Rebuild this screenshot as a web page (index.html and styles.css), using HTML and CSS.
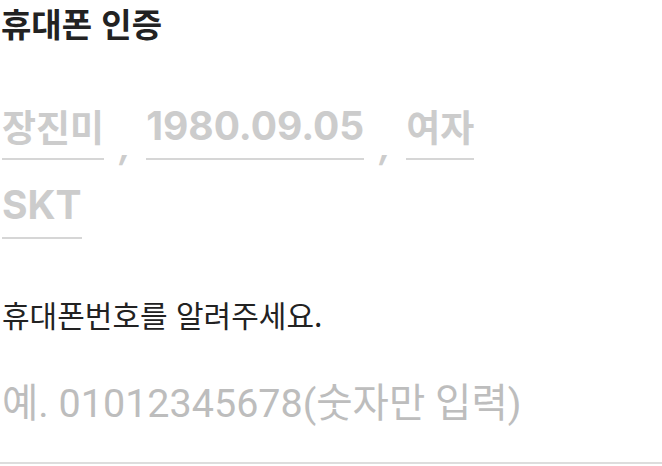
FILE: index.html
```html
<!DOCTYPE html>
<html lang="ko">
<head>
<meta charset="utf-8">
<link rel="stylesheet" href="styles.css">
</head>
<body>
<div class="page">
  <h1 class="title">휴대폰 인증</h1>
  <div class="info-row">
    <span class="field">장진미</span><span class="comma">,</span>
    <span class="field num">1980.09.05</span><span class="comma">,</span>
    <span class="field">여자</span>
  </div>
  <div class="info-row">
    <span class="field num">SKT</span>
  </div>
  <p class="label">휴대폰번호를 알려주세요.</p>
  <div class="phone-input">예. 01012345678(숫자만 입력)</div>
</div>
</body>
</html>
```

FILE: styles.css
```css
html, body {
  margin: 0;
  padding: 0;
  background: #ffffff;
}
.page {
  width: 662px;
  height: 466px;
  overflow: hidden;
  font-family: "Noto Sans CJK KR", sans-serif;
}
.title {
  margin: 0;
  padding-left: 1px;
  font-size: 33px;
  line-height: 46px;
  font-weight: 700;
  color: #222222;
}
.info-row {
  display: flex;
  align-items: flex-end;
  padding-left: 2px;
  margin-top: 57px;
}
.info-row + .info-row {
  margin-top: 22px;
}
.field {
  font-size: 37px;
  font-weight: 700;
  line-height: 46px;
  color: #cccccc;
  border-bottom: 2px solid #d6d6d6;
  padding-bottom: 9px;
}
.field.num {
  font-family: Inter, "Noto Sans CJK KR", sans-serif;
  font-size: 39px;
}
.comma {
  font-family: Inter, sans-serif;
  font-size: 34px;
  font-weight: 700;
  color: #cccccc;
  font-style: italic;
  width: 42px;
  text-align: center;
  line-height: 34px;
  margin-bottom: -4px;
}
.label {
  margin: 55px 0 0 0;
  padding-left: 2px;
  font-size: 30px;
  line-height: 40px;
  color: #222222;
}
.phone-input {
  margin-top: 44px;
  padding-left: 2px;
  font-family: Roboto, "Noto Sans CJK KR", sans-serif;
  font-size: 39.5px;
  line-height: 52px;
  color: #bdbdbd;
  height: 84px;
  border-bottom: 2px solid #dddddd;
}
```
